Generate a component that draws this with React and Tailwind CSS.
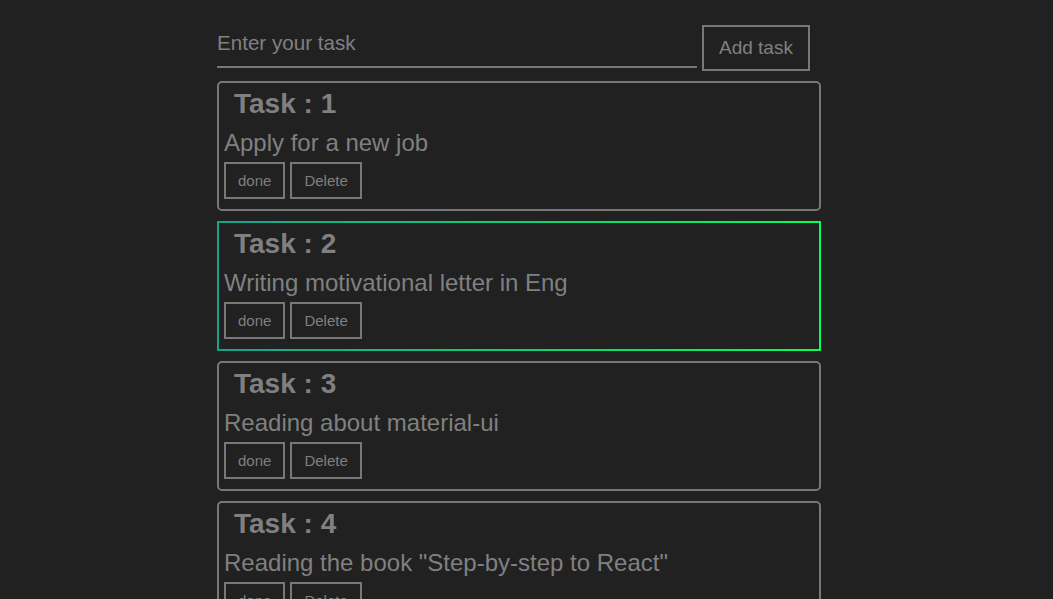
import { useState } from "react";

const TASKS = [
  "Apply for a new job",
  "Writing motivational letter in Eng",
  "Reading about material-ui",
  'Reading the book "Step-by-step to React"',
];

function TaskCard({ index, text, active }) {
  const body = (
    <div className={`h-full bg-[#212121] px-[5px] pt-[5px] ${active ? "" : "rounded-[4px]"}`}>
      <h2 className="ml-[10px] text-[28px] font-bold leading-[32px]">Task : {index}</h2>
      <p className="mt-[9px] text-[24px] leading-[28px]">{text}</p>
      <div className="mt-[5px] flex gap-[5px] text-[15px] leading-[17px]">
        <button className="border-2 border-[#787878] px-[12px] py-[8px]">done</button>
        <button className="border-2 border-[#787878] px-[12px] py-[8px]">Delete</button>
      </div>
    </div>
  );

  if (active) {
    return (
      <div className="mb-[10px] h-[130px] bg-[linear-gradient(to_right,#17a38b,#00ff5e)] p-[2px]">
        {body}
      </div>
    );
  }
  return (
    <div className="mb-[10px] h-[130px] overflow-hidden rounded-[5px] border-2 border-[#787878]">
      {body}
    </div>
  );
}

export default function App() {
  const [task, setTask] = useState("");

  return (
    <div className="min-h-screen bg-[#212121] font-['Liberation_Sans',Arial,sans-serif] text-[#808080]">
      <div className="ml-[217px] w-[604px] pt-[25px]">
        <div className="mb-[10px] flex items-start gap-[5px]">
          <input
            value={task}
            onChange={(e) => setTask(e.target.value)}
            placeholder="Enter your task"
            className="h-[43px] w-[480px] border-b-2 border-[#787878] bg-transparent pb-[6px] text-[20.6px] text-[#808080] outline-none placeholder:text-[#808080]"
          />
          <button className="h-[46px] border-2 border-[#787878] px-[15px] text-[19px]">Add task</button>
        </div>
        {TASKS.map((t, i) => (
          <TaskCard key={i} index={i + 1} text={t} active={i === 1} />
        ))}
      </div>
    </div>
  );
}
